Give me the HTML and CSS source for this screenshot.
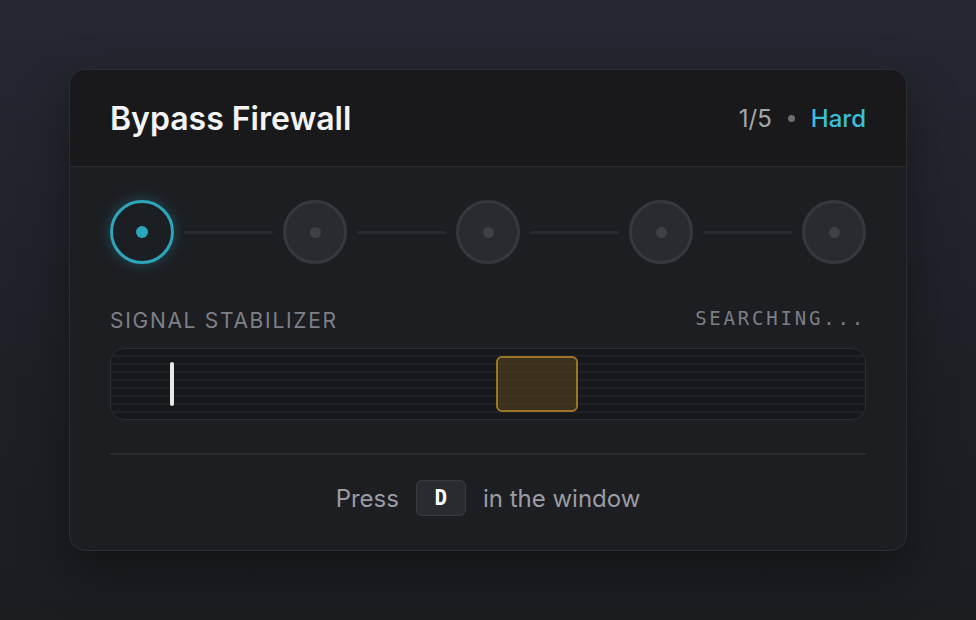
FILE: index.html
```html
<!DOCTYPE html>
<html lang="en">

<head>
	<meta charset="UTF-8">
	<title>Bypass Firewall</title>

	<link rel="stylesheet" href="styles.css">
</head>

<body>
	<div class="card">
		<header class="card-head">
			<h1>Bypass Firewall</h1>
			<div class="meta">
				<span class="count">1/5</span>
				<span class="sep"></span>
				<span class="level">Hard</span>
			</div>
		</header>

		<div class="card-body">
			<div class="steps">
				<div class="step active"><span></span></div>
				<div class="link"></div>
				<div class="step"><span></span></div>
				<div class="link"></div>
				<div class="step"><span></span></div>
				<div class="link"></div>
				<div class="step"><span></span></div>
				<div class="link"></div>
				<div class="step"><span></span></div>
			</div>

			<div class="label-row">
				<span class="label">Signal Stabilizer</span>
				<span class="status">SEARCHING...</span>
			</div>

			<!-- la aguja y la zona objetivo van encima de la pista -->
			<div class="track">
				<div class="target"></div>
				<div class="needle"></div>
			</div>

			<div class="hint">
				<span>Press</span>
				<kbd>D</kbd>
				<span>in the window</span>
			</div>
		</div>
	</div>
</body>

</html>
```

FILE: styles.css
```css
html {
	font-family: Inter, "Noto Sans", sans-serif;
	font-size: 16px;
}

body {
	margin: 0;
	height: 620px;
	display: flex;
	align-items: center;
	justify-content: center;
	background: linear-gradient(180deg, #252831 0%, #1e2026 60%, #1b1d21 100%);
}

.card {
	width: 838px;
	box-sizing: border-box;
	background-color: #1d1e22;
	border: 1px solid #2c2d32;
	border-radius: 16px;
	overflow: hidden;
	box-shadow: 0 20px 50px rgba(0, 0, 0, 0.35);
}

.card-head {
	height: 96px;
	padding: 0 40px;
	display: flex;
	align-items: center;
	justify-content: space-between;
	background-color: #19191c;
	border-bottom: 1px solid #2b2c30;
}

.card-head h1 {
	margin: 0;
	font-size: 32px;
	font-weight: 600;
	color: #f4f4f6;
}

.meta {
	display: flex;
	align-items: center;
	gap: 16px;
	font-size: 24px;
}

.count {
	color: #a4a6ad;
}

.sep {
	width: 7px;
	height: 7px;
	border-radius: 50%;
	background-color: #6c6e75;
}

.level {
	color: #3bbfd8;
	font-weight: 500;
}

.card-body {
	padding: 33px 40px 34px;
}

.steps {
	display: flex;
	align-items: center;
}

.step {
	width: 64px;
	height: 64px;
	box-sizing: border-box;
	border-radius: 50%;
	border: 3px solid #37383d;
	background-color: #2a2b30;
	display: flex;
	align-items: center;
	justify-content: center;
	flex-shrink: 0;
}

.step span {
	width: 11px;
	height: 11px;
	border-radius: 50%;
	background-color: #3f4045;
}

.step.active {
	border-color: #2ba6bb;
	background-color: #1b1e22;
	box-shadow: 0 0 14px rgba(43, 166, 187, 0.35);
}

.step.active span {
	width: 12px;
	height: 12px;
	background-color: #2ba6bb;
}

.link {
	flex: 1;
	height: 3px;
	margin: 0 10px;
	border-radius: 2px;
	background-color: #2a2b30;
}

.label-row {
	margin-top: 44px;
	display: flex;
	justify-content: space-between;
	align-items: center;
	height: 24px;
}

.label {
	font-size: 21px;
	letter-spacing: 1.7px;
	text-transform: uppercase;
	color: #7e8087;
}

.status {
	font-family: "DejaVu Sans Mono", monospace;
	font-size: 19px;
	letter-spacing: 2.8px;
	color: #7c7e85;
	margin-top: -4px;
}

.track {
	position: relative;
	margin-top: 16px;
	height: 72px;
	box-sizing: border-box;
	border: 1px solid #2c2d32;
	border-radius: 14px;
	background-color: #17181c;
	background-image: repeating-linear-gradient(180deg, #17181c 0, #17181c 6px, #1f2025 6px, #1f2025 8px);
}

.needle {
	position: absolute;
	left: 59px;
	top: 13px;
	width: 4px;
	height: 44px;
	border-radius: 2px;
	background-color: #e8e8ea;
}

.target {
	position: absolute;
	left: 385px;
	top: 7px;
	width: 82px;
	height: 56px;
	box-sizing: border-box;
	border: 2px solid #9b7428;
	border-radius: 6px;
	background-color: rgba(120, 90, 30, 0.38);
}

.hint {
	margin-top: 33px;
	padding-top: 25px;
	border-top: 2px solid #2b2c30;
	display: flex;
	align-items: center;
	justify-content: center;
	gap: 17px;
	font-size: 24px;
	color: #9a9ca3;
}

kbd {
	width: 50px;
	height: 36px;
	box-sizing: border-box;
	display: flex;
	align-items: center;
	justify-content: center;
	border: 1px solid #3a3b40;
	border-radius: 6px;
	background-color: #2a2b30;
	font-family: "DejaVu Sans Mono", monospace;
	font-weight: bold;
	font-size: 21px;
	color: #ffffff;
}
```
